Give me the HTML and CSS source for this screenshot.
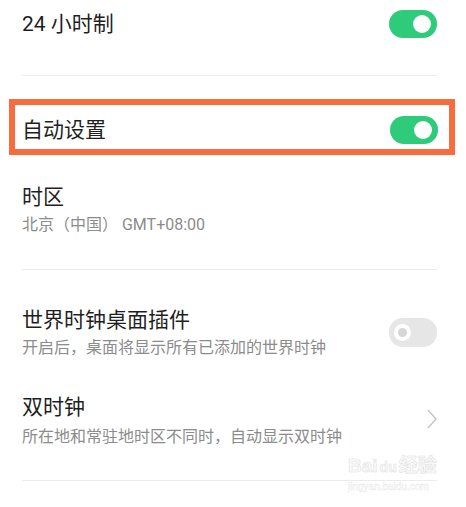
FILE: index.html
```html
<!DOCTYPE html>
<html lang="zh-CN">
<head>
<meta charset="UTF-8" />
<meta name="viewport" content="width=device-width, initial-scale=1" />
<title>日期与时间</title>
<link rel="stylesheet" href="styles.css">
</head>
<body>

<div class="list">
  <!-- 24 小时制 -->
  <div class="row row-first">
    <div class="text">
      <div class="title">24 小时制</div>
    </div>
    <span class="switch on"></span>
  </div>
  <div class="divider"></div>

  <!-- 自动设置（高亮框） -->
  <div class="highlight">
    <div class="row row-boxed">
      <div class="text">
        <div class="title">自动设置</div>
      </div>
      <span class="switch on"></span>
    </div>
  </div>

  <!-- 时区 -->
  <div class="row row-zone">
    <div class="text">
      <div class="title">时区</div>
      <div class="summary">北京（中国） GMT+08:00</div>
    </div>
  </div>
  <div class="divider"></div>

  <!-- 世界时钟桌面插件 -->
  <div class="row row-widget">
    <div class="text">
      <div class="title">世界时钟桌面插件</div>
      <div class="summary">开启后，桌面将显示所有已添加的世界时钟</div>
    </div>
    <span class="switch off"></span>
  </div>

  <!-- 双时钟 -->
  <div class="row row-dual">
    <div class="text">
      <div class="title">双时钟</div>
      <div class="summary">所在地和常驻地时区不同时，自动显示双时钟</div>
    </div>
    <svg class="chevron" width="10" height="20" viewBox="0 0 10 20" aria-hidden="true">
      <path d="M1 1 L9 10 L1 19" fill="none" stroke="#c4c4c4" stroke-width="1.4" />
    </svg>
  </div>
  <div class="divider"></div>
</div>

<!-- 水印 -->
<div class="watermark">
  <div class="wm-logo">Bai<span class="wm-du">du</span>经验</div>
  <div class="wm-url">jingyan.baidu.com</div>
</div>

</body>
</html>
```
FILE: styles.css
```css
:root {
  --text-main: #1f1f1f;
  --text-sub: #8c8c8c;
  --green: #2ecb7b;
  --off: #e6e6e6;
  --line: #ececec;
  --mark: #f86d3f;
}

body {
  margin: 0;
  width: 466px;
  height: 507px;
  overflow: hidden;
  background: #ffffff;
  font-family: Roboto, "Noto Sans CJK SC", sans-serif;
  position: relative;
}

.list {
  display: flex;
  flex-direction: column;
}

.row {
  display: flex;
  align-items: center;
  justify-content: space-between;
  padding: 0 29px 0 22px;
}

.text {
  display: flex;
  flex-direction: column;
}

.title {
  font-size: 21px;
  line-height: 28px;
  color: var(--text-main);
}

.summary {
  font-size: 16px;
  line-height: 22px;
  color: var(--text-sub);
  margin-top: 3px;
}

.divider {
  height: 1px;
  background: var(--line);
  margin: 0 29px 0 22px;
}

.row-first {
  padding-top: 10px;
  padding-bottom: 37px;
}

.highlight {
  margin: 23px 11px 0 9px;
  border: 6px solid var(--mark);
}

.row-boxed {
  padding: 11px 11px 5px 7px;
}

.row-zone {
  padding-top: 28px;
  padding-bottom: 33px;
}

.row-widget {
  padding-top: 36px;
}

.row-dual {
  padding-top: 34px;
  padding-bottom: 32px;
}

.row-dual .summary {
  margin-top: 5px;
}

/* 开关 */
.switch {
  width: 48px;
  height: 28px;
  border-radius: 14px;
  position: relative;
  flex-shrink: 0;
}

.switch::after {
  content: "";
  position: absolute;
  top: 5px;
  width: 18px;
  height: 18px;
  border-radius: 50%;
  box-sizing: border-box;
}

.switch.on {
  background: var(--green);
}

.switch.on::after {
  right: 6px;
  background: #ffffff;
}

.switch.off {
  background: var(--off);
  height: 29px;
}

.switch.off::after {
  left: 5px;
  top: 6px;
  width: 17px;
  height: 17px;
  border: 4px solid #ffffff;
  background: #d6d6d6;
}

.chevron {
  margin-top: -4px;
}

/* 水印 */
.watermark {
  position: absolute;
  left: 348px;
  top: 454px;
  width: 92px;
  color: #fbfbfb;
  -webkit-text-stroke: 0.6px #e2e2e2;
  font-family: "Liberation Sans", "Noto Sans CJK SC", sans-serif;
  pointer-events: none;
}

.wm-logo {
  font-size: 19px;
  line-height: 24px;
  font-weight: bold;
}

.wm-du {
  font-size: 14px;
  margin: 0 2px;
}

.wm-url {
  font-size: 10px;
  line-height: 12px;
  margin-top: 2px;
  -webkit-text-stroke: 0.3px #e4e4e4;
}
```
